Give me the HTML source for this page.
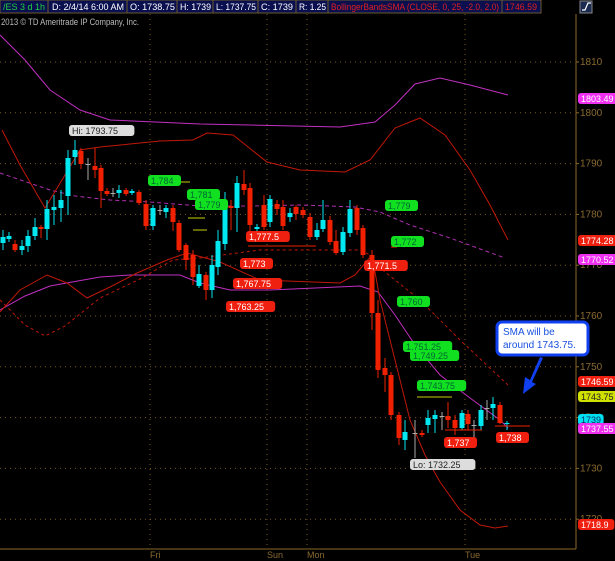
<!DOCTYPE html>
<html><head><meta charset="utf-8"><style>
html,body{margin:0;padding:0;background:#000;width:615px;height:561px;overflow:hidden}
svg{display:block;font-family:"Liberation Sans",sans-serif}
</style></head><body>
<svg id="s" width="615" height="561" viewBox="0 0 615 561">
<rect width="615" height="561" fill="#000"/>
<!-- top bar -->
<g font-size="9" fill="#fff" stroke-width="1">
<rect x="0" y="0" width="48" height="13" fill="#0a0f50" stroke="#6a5a2a"/>
<text x="3" y="10" fill="#20d040" textLength="42" lengthAdjust="spacingAndGlyphs">/ES 3 d 1h</text>
<rect x="48" y="0" width="79" height="13" fill="#0a0f50" stroke="#6a5a2a"/>
<text x="52" y="10" textLength="72" lengthAdjust="spacingAndGlyphs">D: 2/4/14 6:00 AM</text>
<rect x="127" y="0" width="50" height="13" fill="#0a0f50" stroke="#6a5a2a"/>
<text x="130" y="10" textLength="45" lengthAdjust="spacingAndGlyphs">O: 1738.75</text>
<rect x="177" y="0" width="36" height="13" fill="#0a0f50" stroke="#6a5a2a"/>
<text x="180" y="10" textLength="31" lengthAdjust="spacingAndGlyphs">H: 1739</text>
<rect x="213" y="0" width="45" height="13" fill="#0a0f50" stroke="#6a5a2a"/>
<text x="216" y="10" textLength="40" lengthAdjust="spacingAndGlyphs">L: 1737.75</text>
<rect x="258" y="0" width="38" height="13" fill="#0a0f50" stroke="#6a5a2a"/>
<text x="261" y="10" textLength="32" lengthAdjust="spacingAndGlyphs">C: 1739</text>
<rect x="296" y="0" width="32" height="13" fill="#0a0f50" stroke="#6a5a2a"/>
<text x="299" y="10" textLength="27" lengthAdjust="spacingAndGlyphs">R: 1.25</text>
<rect x="328" y="0" width="174" height="13" fill="#0a0f50" stroke="#6a5a2a"/>
<text x="331" y="10" fill="#e02020" textLength="168" lengthAdjust="spacingAndGlyphs">BollingerBandsSMA (CLOSE, 0, 25, -2.0, 2.0)</text>
<rect x="502" y="0" width="39" height="13" fill="#0a0f50" stroke="#6a5a2a"/>
<text x="505" y="10" fill="#e02020" textLength="32" lengthAdjust="spacingAndGlyphs">1746.59</text>
</g>
<rect x="580" y="1" width="12" height="12" fill="#1a2a50" stroke="#888"/>
<path d="M582 10h3l3-7h3" stroke="#fff" fill="none" stroke-width="1.2"/>
<text x="1" y="25" font-size="9" fill="#bbb" textLength="138" lengthAdjust="spacingAndGlyphs">2013 © TD Ameritrade IP Company, Inc.</text>
<g id="grid" stroke="#7a5a20" stroke-dasharray="1,4" stroke-width="1"></g>
<line x1="576" y1="14" x2="576" y2="549" stroke="#8a6a2a"/>
<line x1="0" y1="549" x2="576" y2="549" stroke="#8a6a2a"/>
<g id="lines" fill="none"></g>
<g id="c"></g>
<g id="lab" font-size="9"></g>
<g font-size="9" fill="#8a6a30">
<text x="150" y="558">Fri</text><text x="267" y="558">Sun</text><text x="307" y="558">Mon</text><text x="465" y="558">Tue</text>
</g>
<!-- callout -->
<rect x="497" y="322" width="91" height="33" rx="5" fill="#fff" stroke="#1040f0" stroke-width="3"/>
<text x="503" y="335" font-size="10" fill="#1850e0">SMA will be</text>
<text x="503" y="348" font-size="10" fill="#1850e0">around 1743.75.</text>
<path d="M540 357 L530 380 L525 377 L523 394 L536 384 L532 382 L543 358 Z" fill="#1040f0"/>
</svg>
<script>
var NS="http://www.w3.org/2000/svg";
function el(p,t,a,txt){var e=document.createElementNS(NS,t);for(var k in a)e.setAttribute(k,a[k]);if(txt!=null)e.textContent=txt;document.getElementById(p).appendChild(e);return e;}
function Y(p){return 62+(1810-p)*5.08;}
for(var p=1720;p<=1810;p+=10){var y=Y(p);el("grid","line",{x1:0,y1:y,x2:574,y2:y});
 el("lab","line",{x1:576,y1:y,x2:579,y2:y,stroke:"#8a6a2a"});
 el("lab","text",{x:580,y:y+3,fill:"#8a6a30","font-size":"10"},p);}
[150,267,307,465].forEach(function(x){el("grid","line",{x1:x,y1:14,x2:x,y2:549});});
function line(pts,col,dash,w){el("lines","polyline",{points:pts.map(function(a){return a.join(",")}).join(" "),stroke:col,"stroke-width":w||1,"stroke-dasharray":dash||""});}
line([[0,35],[25,60],[50,90],[80,110],[110,120],[200,124],[340,127],[375,122],[395,105],[415,84],[440,78],[470,85],[508,95]],"#c030c0");
line([[0,310],[25,296],[50,286],[100,277],[130,275],[180,275],[200,283],[230,290],[270,290],[360,286],[378,292],[395,315],[415,345],[440,375],[470,398],[500,420],[508,428]],"#c030c0");
line([[0,173],[50,190],[75,196],[110,200],[150,202],[200,206],[250,206],[300,205],[355,207],[380,212],[410,225],[450,238],[505,258]],"#b030b0","4,3");
line([[2,130],[20,165],[45,208],[65,175],[80,150],[100,147],[130,144],[160,141],[193,140],[207,133],[233,135],[267,162],[300,170],[345,172],[370,160],[395,128],[420,118],[445,135],[470,170],[490,205],[508,240]],"#c01808");
line([[0,300],[25,325],[45,336],[65,326],[100,298],[140,279],[173,260],[200,258],[260,250],[320,250],[360,250],[372,256],[380,268],[420,300],[460,340],[508,385]],"#c01808","3,3");
line([[0,312],[20,290],[47,275],[67,283],[87,298],[110,287],[137,273],[167,260],[187,253],[220,262],[260,280],[340,283],[355,275],[372,255],[380,300],[395,360],[410,420],[425,455],[440,482],[460,510],[480,525],[495,528],[508,526]],"#c01808");
var C=[[3,237,243,230,250,"c"],[9,236,239,232,242,"c"],[15,244,250,240,252,"r"],[22,246,250,240,255,"c"],[28,236,246,230,252,"c"],[35,227,236,218,240,"c"],[41,227,229,225,238,"r"],[47,209,229,200,240,"c"],[54,207,210,195,225,"c"],[61,200,208,190,222,"c"],[68,158,196,150,215,"c"],[75,150,157,140,165,"c"],[81,151,164,148,169,"r"],[88,164,165,158,180,"g"],[95,166,170,148,178,"r"],[101,168,191,165,208,"r"],[107,191,194,188,196,"r"],[113,193,194,188,197,"g"],[119,190,193,185,198,"c"],[126,190,194,188,196,"r"],[132,191,193,189,195,"c"],[139,192,203,190,205,"r"],
[146,204,226,200,230,"r"],[153,208,226,205,230,"c"],[160,210,211,205,215,"g"],[166,208,212,205,218,"c"],[173,208,222,205,231,"r"],[179,223,250,220,252,"r"],[186,245,260,243,270,"r"],[193,255,277,250,285,"r"],[199,274,286,265,288,"c"],[206,275,290,272,300,"r"],[212,265,290,255,298,"c"],[218,241,267,230,275,"c"],[225,207,244,192,250,"c"],[231,206,208,200,230,"r"],[237,183,208,176,232,"c"],[244,184,190,170,195,"r"],[250,188,225,183,232,"r"],[257,227,229,224,232,"c"],[264,205,227,195,230,"r"],[270,199,222,195,227,"c"],[277,204,209,200,215,"r"],[283,207,226,200,230,"r"],[290,213,217,208,222,"c"],[296,207,214,205,220,"r"],
[303,210,215,207,218,"r"],[310,217,237,213,240,"r"],[317,230,237,223,240,"c"],[323,220,229,200,232,"c"],[330,220,242,216,245,"r"],[336,241,253,230,255,"r"],[343,232,252,227,255,"c"],[350,209,233,200,237,"c"],[357,208,230,205,235,"r"],[363,228,255,225,258,"r"],[372,255,313,250,330,"r"],[378,313,370,300,378,"r"],[385,368,375,358,392,"r"],[391,375,415,372,420,"r"],[399,415,438,412,445,"r"],[405,432,440,420,450,"c"],[415,433,434,420,458,"g"],[422,433,435,430,437,"r"],[428,418,425,410,433,"c"],[435,415,419,410,433,"c"],[442,416,417,412,430,"g"],[448,416,420,402,428,"r"],[455,420,428,415,435,"r"],[462,413,428,410,430,"c"],[468,414,424,410,430,"r"],[474,425,426,420,438,"g"],[481,410,426,405,430,"c"],[487,408,409,400,420,"g"],[493,404,408,397,420,"c"],[500,405,423,402,424,"r"],[507,423,424,421,430,"c"]];
var col={c:"#00e8f0",r:"#f02000",g:"#aaa"};
C.forEach(function(k){var f=col[k[5]];el("c","line",{x1:k[0],y1:k[3],x2:k[0],y2:k[4],stroke:f});el("c","rect",{x:k[0]-2.5,y:k[1],width:5,height:Math.max(1,k[2]-k[1]),fill:f});});
[[148,190,182,"#c8d000"],[188,205,218,"#c8d000"],[193,207,230,"#c8d000"],[248,316,246,"#f02000"],[391,397,247,"#f02000"],[417,452,397,"#c8d000"],[495,530,426,"#f02000"],[445,482,430,"#f02000"]].forEach(function(l){el("c","line",{x1:l[0],y1:l[2],x2:l[1],y2:l[2],stroke:l[3]});});
function tag(x,y,t,bg,fg,w){el("lab","rect",{x:x,y:y,width:w||(t.length*5.4+6),height:11,rx:3,fill:bg});el("lab","text",{x:x+3,y:y+9,fill:fg},t);}
tag(69,125,"Hi: 1793.75","#ddd","#222");
tag(410,459,"Lo: 1732.25","#ddd","#222");
[[148,175,"1,784"],[187,189,"1,781"],[195,199,"1,779"],[385,200,"1,779"],[391,236,"1,772"],[397,296,"1,760"],[403,341,"1,751.25"],[410,350,"1,749.25"],[417,380,"1,743.75"]].forEach(function(a){tag(a[0],a[1],a[2],"#10e020","#063");});
[[246,231,"1,777.5"],[240,258,"1,773"],[233,278,"1,767.75"],[226,301,"1,763.25"],[364,260,"1,771.5"],[444,437,"1,737"],[496,432,"1,738"]].forEach(function(a){tag(a[0],a[1],a[2],"#f02010","#fff");});
[[93,"1803.49","#f030f0","#fff"],[235,"1774.28","#f02010","#fff"],[254,"1770.52","#f030f0","#fff"],[376,"1746.59","#f02010","#fff"],[391,"1743.75","#d0e000","#222"],[414,"1739","#00e0f0","#036"],[423,"1737.55","#f030f0","#fff"],[519,"1718.9","#f02010","#fff"]].forEach(function(a){tag(578,a[0],a[1],a[2],a[3],a[1].length*5.4+4);});
</script>
</body></html>
